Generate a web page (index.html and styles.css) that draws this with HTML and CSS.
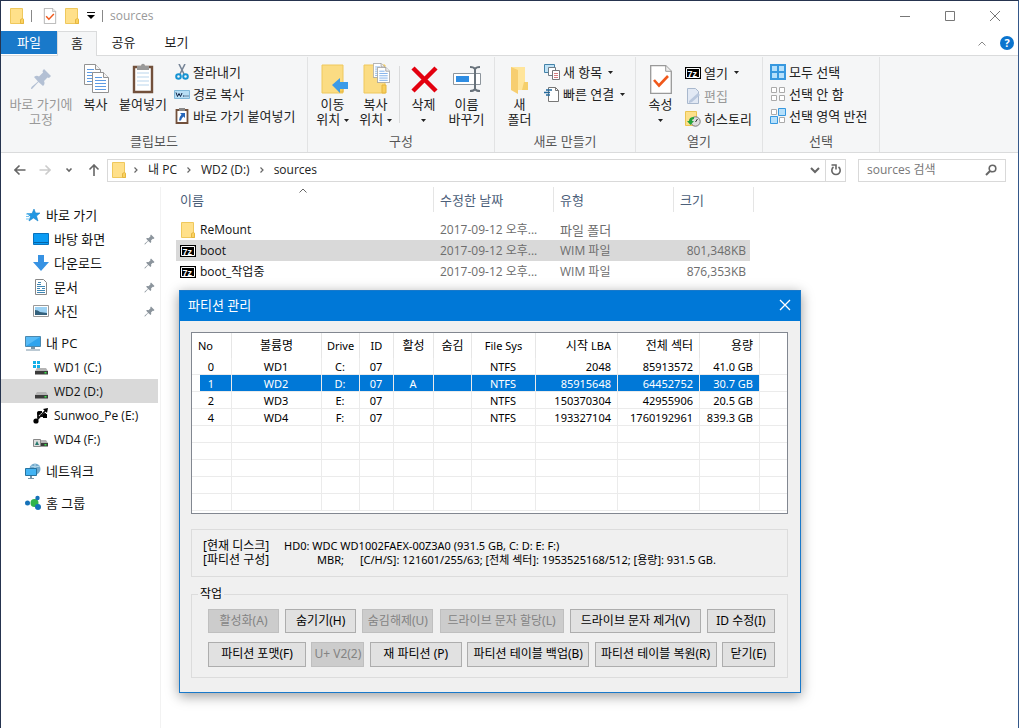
FILE: index.html
```html
<!DOCTYPE html>
<html lang="ko">
<head>
<meta charset="utf-8">
<title>sources</title>
<link rel="stylesheet" href="styles.css">
</head>
<body>
<svg class="defs" aria-hidden="true">
  <symbol id="folder" viewBox="0 0 14 16"><path d="M.5.5h12v10l1 .5v4.5H.5z" fill="#ffe08a" stroke="#efc85c"/><path d="M10.500 15.500v-4l2-1 1 1v4z" fill="#fbd25f" stroke="#e5b640"/></symbol>
  <symbol id="check" viewBox="0 0 22 29"><path d="M.7.7h15l5.600 5.600v22H.7z" fill="#fff" stroke="#999" stroke-width="1.300"/><path d="M15.700.7v5.600h5.600" fill="#eee" stroke="#999"/><path d="M4 15l5 5.500 9-9.500" fill="none" stroke="#f0581b" stroke-width="2.600"/></symbol>
  <symbol id="pin" viewBox="0 0 22 22"><path d="M14 1l7 7-2 2-1.500-.5-3.500 3.500c1 2 .5 4-1 5L8.500 14 2 21l-1 0 .5-2L8 13.500 4 9c2-1.500 3.500-1.500 5-.5l4-4L12.500 3z"/></symbol>
  <symbol id="page" viewBox="0 0 17 21"><path d="M.5.5h11l5 5v15H.5z" fill="#fff" stroke="#929292"/><path d="M11.500.5v5h5" fill="#f2f2f2" stroke="#929292"/><path d="M3 5.500h7M3 8.500h11M3 11.500h11M3 14.500h11M3 17.500h11" stroke="#5d9be3"/></symbol>
  <symbol id="seven" viewBox="0 0 16 12"><path d="M0 0h16v12H0z"/><path d="M1.500 1.500h13v9h-13z" fill="none" stroke="#fff"/><text x="2.500" y="9.500" fill="#fff" font-family="Liberation Sans, sans-serif" font-weight="bold" font-size="9">7z</text></symbol>
  <symbol id="drive" viewBox="0 0 16 16"><path d="M4 8h9l2 3H2z" fill="#b4b4b4"/><path d="M2 11h13v3.500H2z" fill="#3c3c3c"/><path d="M11.500 12h2v1.500h-2z" fill="#38e449"/></symbol>
  <symbol id="tri" viewBox="0 0 5 3"><path d="M0 0h5L2.500 3z" fill="currentColor"/></symbol>
  <symbol id="chev" viewBox="0 0 8 8"><path d="M2.500 1.500L5 4 2.500 6.500" fill="none" stroke="#666" stroke-width="1.200"/></symbol>
</svg>
<div class="window">
  <header class="titlebar">
    <svg class="qi"><use href="#folder"/></svg><i class="bar"></i>
    <svg class="qi check"><use href="#check"/></svg>
    <svg class="qi"><use href="#folder"/></svg>
    <svg class="quick" viewBox="0 0 8 7"><path d="M0 .5h8" stroke="#111"/><path d="M0 3h8L4 7z"/></svg><i class="bar"></i>
    <span class="caption">sources</span>
    <div class="controls">
      <button aria-label="최소화"><svg viewBox="0 0 12 12"><path d="M1 6.500h10"/></svg></button>
      <button aria-label="최대화"><svg viewBox="0 0 12 12"><path d="M1.500 1.500h9v9h-9z"/></svg></button>
      <button aria-label="닫기"><svg viewBox="0 0 12 12"><path d="M1 1l10 10M11 1L1 11"/></svg></button>
    </div>
  </header>
  <nav class="tabs">
    <button class="tab file">파일</button><button class="tab active">홈</button><button class="tab">공유</button><button class="tab">보기</button>
    <div class="help"><svg class="up" viewBox="0 0 8 5"><path d="M.5 4.500L4 1l3.500 3.500" fill="none" stroke="#888"/></svg><button class="question" aria-label="도움말">?</button></div>
  </nav>

  <section class="ribbon">
    <div class="group clip">
      <div class="tools">
        <button class="big wide off"><svg viewBox="0 0 32 32"><use href="#pin" x="5" y="5" width="22" height="22" fill="#b3c0d4"/></svg>바로 가기에<br>고정</button>
        <button class="big mid"><svg viewBox="0 0 32 32"><use href="#page" x="4" y="1" width="17" height="21"/><use href="#page" x="12" y="9" width="17" height="21"/></svg>복사</button>
        <button class="big paste"><svg viewBox="0 0 32 32"><path d="M7 4h18v25H7z" fill="#fff" stroke="#72503b" stroke-width="2.400"/><path d="M10 10h12M10 14h12M10 18h12M10 22h12" stroke="#b9d5ec"/><path d="M10 3h4c0-3 4-3 4 0h4v4H10z" fill="#999"/></svg>붙여넣기</button>
        <div class="smalls">
          <button class="small"><svg viewBox="0 0 16 16"><path d="M5 0l5 10M11 0L6 10" stroke="#788698" stroke-width="1.600"/><circle cx="4.500" cy="12.500" r="2.300" fill="none" stroke="#1593d3" stroke-width="2"/><circle cx="11.500" cy="12.500" r="2.300" fill="none" stroke="#1593d3" stroke-width="2"/></svg>잘라내기</button>
          <button class="small"><svg viewBox="0 0 16 16"><path d="M.5 4.500h15v8H.5z" fill="#b7def5" stroke="#80b8d9"/><path d="M2 6.500l1.500 4 1.500-3 1.500 3L8 7M9 10h1.500M11.500 10h1M13.500 10h1" fill="none" stroke="#124"/></svg>경로 복사</button>
          <button class="small"><svg viewBox="0 0 16 16"><path d="M2.500 2h11v13h-11z" fill="#fff" stroke="#72503b" stroke-width="1.800"/><path d="M5 0h6v3H5z" fill="#888"/><path d="M6 5h5v5L9.500 8.500Q7.500 10 7 12.500H5Q5 9 7.500 6.500z" fill="#2767ba"/></svg>바로 가기 붙여넣기</button>
        </div>
      </div>
      <div class="name">클립보드</div>
    </div>
    <div class="group org">
      <div class="tools">
        <button class="big mid"><svg viewBox="0 0 32 32"><path d="M5 2h21v28H5z" fill="#fbdc83" stroke="#efc85c"/><path d="M22 23v6h4v-6z" fill="#f8cf5d" stroke="#e5b640"/><path d="M15 22l8-7v4h8v7h-8v4z" fill="#3c9be8"/></svg>이동<br>위치 <svg class="tri"><use href="#tri"/></svg></button>
        <button class="big mid"><svg viewBox="0 0 32 32"><path d="M4 2h21v28H4z" fill="#fbdc83" stroke="#efc85c"/><path d="M22 22v8h4v-8z" fill="#f8cf5d" stroke="#e5b640"/><use href="#page" x="13" y="0" width="12" height="15"/><use href="#page" x="17" y="4" width="13" height="16"/></svg>복사<br>위치 <svg class="tri"><use href="#tri"/></svg></button>
        <i class="split"></i>
        <button class="big mid"><svg viewBox="0 0 32 32"><path d="M5 5l23 23M28 5L5 28" stroke="#e3000f" stroke-width="4.500"/></svg>삭제<br><svg class="tri"><use href="#tri"/></svg></button>
        <button class="big mid"><svg viewBox="0 0 32 32"><path d="M2.500 10.500h27v11h-27z" fill="#fff" stroke="#8d959c"/><path d="M5 13h13v6H5z" fill="#2e8de3"/><path d="M19 4q4 0 5 2 1-2 5-2M24 6v20M19 28q4 0 5-2 1 2 5 2" fill="none" stroke="#68727b" stroke-width="2"/></svg>이름<br>바꾸기</button>
      </div>
      <div class="name">구성</div>
    </div>
    <div class="group new">
      <div class="tools">
        <button class="big mid"><svg viewBox="0 0 32 32"><path d="M7 4h14v16l3 3v4H7z" fill="#ffe59b"/><path d="M7 4l7 3v24l-7-4z" fill="#f7ce70"/><path d="M20 19h4v8h-6z" fill="#f5cf6c"/></svg>새<br>폴더</button>
        <div class="smalls">
          <button class="small"><svg viewBox="0 0 16 16"><path d="M.5.5h10v8H.5z" fill="#bfe2f7" stroke="#4382a8"/><path d="M4.500 3.500h7v8h-7z" fill="#fff" stroke="#6f7c86"/><path d="M8.500 6.500h7v9h-7z" fill="#fff" stroke="#777"/><path d="M10 9.500h4M10 11.500h4M10 13.500h4" stroke="#d67d7d"/></svg>새 항목 <svg class="tri"><use href="#tri"/></svg></button>
          <button class="small"><svg viewBox="0 0 16 16"><path d="M4.500 1.500h7l3 3v11h-10z" fill="#fff" stroke="#777"/><path d="M2 4h6M0 6.500h6M2 9h4" stroke="#23689c" stroke-width="1.300"/><path d="M11.500 1.500v3h3" fill="none" stroke="#777"/></svg>빠른 연결 <svg class="tri"><use href="#tri"/></svg></button>
        </div>
      </div>
      <div class="name">새로 만들기</div>
    </div>
    <div class="group open">
      <div class="tools">
        <button class="big mid"><svg viewBox="0 0 32 32"><use href="#check" x="5" y="2" width="22" height="29"/></svg>속성<br><svg class="tri"><use href="#tri"/></svg></button>
        <div class="smalls loose">
          <button class="small"><svg viewBox="0 0 16 16"><use href="#seven" y="2" width="16" height="12"/></svg>열기 <svg class="tri"><use href="#tri"/></svg></button>
          <button class="small off"><svg viewBox="0 0 16 16"><path d="M2.500.5h8l3 3v12h-11z" fill="#e2e9f4" stroke="#a9b8cd"/><path d="M4 13l9-8 2 2-8 7-3 1z" fill="#b9c7dd"/></svg>편집</button>
          <button class="small"><svg viewBox="0 0 16 16"><path d="M.5.5h11v14H.5z" fill="#fde08a" stroke="#ebc552"/><circle cx="10.500" cy="10.500" r="4.700" fill="#ddd" stroke="#777"/><path d="M10.500 11l2-3" stroke="#333"/><path d="M2 10h2q0-4 5-4v2q-2 0-2 2h2l-3.500 4z" fill="#25a33a"/></svg>히스토리</button>
        </div>
      </div>
      <div class="name">열기</div>
    </div>
    <div class="group select">
      <div class="tools">
        <div class="smalls">
          <button class="small"><svg viewBox="0 0 16 16"><path d="M0 0h16v16H0z" fill="#3798df"/><path d="M2 2h5v5H2zM9 2h5v5H9zM2 9h5v5H2zM9 9h5v5H9z" fill="#b6e0fb"/></svg>모두 선택</button>
          <button class="small"><svg viewBox="0 0 16 16"><path d="M1.500 1.500h5v5h-5zM9.500 1.500h5v5h-5zM1.500 9.500h5v5h-5zM9.500 9.500h5v5h-5z" fill="#fff" stroke="#aaa"/></svg>선택 안 함</button>
          <button class="small"><svg viewBox="0 0 16 16"><path d="M1.500 1.500h5v5h-5zM9.500 9.500h5v5h-5z" fill="#fff" stroke="#aaa"/><path d="M8.500.5h7v7h-7zM.5 8.500h7v7h-7z" fill="#b6e0fb" stroke="#3798df"/></svg>선택 영역 반전</button>
        </div>
      </div>
      <div class="name">선택</div>
    </div>
  </section>

  <div class="address">
    <div class="arrows">
      <button aria-label="뒤로"><svg viewBox="0 0 12 12"><path d="M11.500 6H1M5.500 1.500L1 6l4.500 4.500"/></svg></button>
      <button aria-label="앞으로" class="faint"><svg viewBox="0 0 12 12"><path d="M.5 6H11M6.500 1.500L11 6l-4.500 4.500"/></svg></button>
      <button aria-label="최근 위치" class="recent"><svg viewBox="0 0 12 12"><path d="M3.500 4.500L6 7l2.500-2.500"/></svg></button>
      <button aria-label="위로"><svg viewBox="0 0 12 12"><path d="M6 12V1M1.500 5.500L6 1l4.500 4.500"/></svg></button>
    </div>
    <div class="path">
      <svg class="qi"><use href="#folder"/></svg>
      <svg class="chev"><use href="#chev"/></svg><a href="#pc">내 PC</a>
      <svg class="chev"><use href="#chev"/></svg><a href="#d">WD2 (D:)</a>
      <svg class="chev"><use href="#chev"/></svg><a href="#s">sources</a>
      <button class="drop" aria-label="이전 위치"><svg viewBox="0 0 10 10"><path d="M1 3l4 4 4-4" fill="none" stroke="#666" stroke-width="2"/></svg></button>
      <button class="refresh" aria-label="새로 고침"><svg viewBox="0 0 12 12"><path d="M8.500 3a4.200 4.200 0 1 1-5 0" fill="none" stroke="#666" stroke-width="1.600"/><path d="M1.500 1h4.500v4.500" fill="none" stroke="#666" stroke-width="1.600"/></svg></button>
    </div>
    <label class="search"><input type="text" placeholder="sources 검색" aria-label="sources 검색"><svg viewBox="0 0 12 12"><circle cx="7.500" cy="4.500" r="3.300" fill="none" stroke="#666" stroke-width="1.600"/><path d="M5 7L1 11" stroke="#666" stroke-width="2"/></svg></label>
  </div>

  <main class="content">
    <aside class="side">
      <ul>
        <li class="root"><svg viewBox="0 0 16 16"><path d="M9 2l1.500 4H15l-3.500 3 1.500 5-4.500-3L4 14l1.500-4.500L2 6.500h5z" fill="#2197e3" stroke="#1785c9" stroke-width=".6"/><path d="M1 7h4M1 9.500h3M1 12h3" stroke="#70c3f1" stroke-width="1.200"/></svg>바로 가기</li>
        <li><svg viewBox="0 0 16 16"><path d="M.5 2.500h15v11H.5z" fill="#0b9cf4" stroke="#0872bd"/><path d="M1 11.500h14" stroke="#0564a9"/></svg>바탕 화면<svg class="pin"><use href="#pin"/></svg></li>
        <li><svg viewBox="0 0 16 16"><path d="M5 0h6v7h5l-8 9-8-9h5z" fill="#3792e3"/></svg>다운로드<svg class="pin"><use href="#pin"/></svg></li>
        <li><svg viewBox="0 0 16 16"><path d="M2.500.5h8l3 3v12h-11z" fill="#fff" stroke="#888"/><path d="M5 3.500h3M4 5.500h4M4 7.500h8M4 9.500h3M9 9.500h3M4 11.500h8M4 13.500h8" stroke="#3f86b4"/></svg>문서<svg class="pin"><use href="#pin"/></svg></li>
        <li><svg viewBox="0 0 16 16"><path d="M.5 2.500h15v11H.5z" fill="#fff" stroke="#999"/><path d="M2 4h12v8H2z" fill="#9dd2f4"/><path d="M2 7q3 0 5 2l7 1v2H2z" fill="#34617c"/></svg>사진<svg class="pin"><use href="#pin"/></svg></li>
      </ul>
      <ul>
        <li class="root"><svg viewBox="0 0 16 16"><path d="M.5 1.500h15v10H.5z" fill="#57bbf7" stroke="#4b88ae"/><path d="M1 11L15 2v9z" fill="#2fa4ee"/><path d="M6 12h4v2H6zM1 14.500h14v1H1z" fill="#7894a7"/></svg>내 PC</li>
        <li class="latin"><svg viewBox="0 0 16 16"><use href="#drive"/><path d="M0 1h3v3H0zM4 1h3v3H4zM0 5h3v3H0zM4 5h3v3H4z" fill="#12afe7"/></svg>WD1 (C:)</li>
        <li class="latin current"><svg viewBox="0 0 16 16"><use href="#drive"/></svg>WD2 (D:)</li>
        <li class="latin"><svg viewBox="0 0 16 16"><path d="M3 13L13 2M5 10V6q0-2 3-2h1M8 8h4V5" fill="none" stroke="#111" stroke-width="1.800"/><circle cx="3" cy="13" r="2.600"/><circle cx="6" cy="5" r="2"/><path d="M10 1l5-1-1 5zM10 6h4v4h-4z"/></svg>Sunwoo_Pe (E:)</li>
        <li class="latin"><svg viewBox="0 0 16 16"><use href="#drive"/><path d="M.5 7.500h7v7h-7z" fill="#ddd" stroke="#888"/><path d="M2 13l2-4 2 4z" fill="#28796e"/></svg>WD4 (F:)</li>
      </ul>
      <ul><li class="root"><svg viewBox="0 0 16 16"><circle cx="10" cy="6" r="5.500" fill="#72a9cc"/><path d="M6 3q4 2 9 0M10 1v10" stroke="#b9dced" fill="none"/><path d="M.5 5.500h11v7H.5z" fill="#43b4f4" stroke="#27739f"/><path d="M5 13h2v2h2v1H3v-1h2z" fill="#7894a7"/></svg>네트워크</li></ul>
      <ul><li class="root"><svg viewBox="0 0 16 16"><path d="M10 8l2-5M10 8l3 4" stroke="#69a9c7" stroke-width="2"/><circle cx="9.500" cy="8" r="4" fill="#32b44b"/><circle cx="2.500" cy="8" r="2.500" fill="#1672b9"/><circle cx="12.500" cy="3" r="2.200" fill="#1672b9"/><circle cx="13" cy="12" r="3" fill="#1672b9"/></svg>홈 그룹</li></ul>
    </aside>
    <section class="files">
      <table class="list">
        <thead><tr><th class="c1">이름<svg class="sort" viewBox="0 0 8 5"><path d="M.5 4.500L4 1l3.500 3.500" fill="none" stroke="#666"/></svg></th><th class="c2">수정한 날짜</th><th class="c2">유형</th><th class="c3">크기</th></tr></thead>
        <tbody>
          <tr><td><div class="file-name"><svg viewBox="0 0 16 16"><use href="#folder" x="1" width="14" height="16"/></svg>ReMount</div></td><td>2017-09-12 오후...</td><td class="ko">파일 폴더</td><td></td></tr>
          <tr class="current"><td><div class="file-name"><svg viewBox="0 0 16 16"><use href="#seven" y="2" width="16" height="12"/></svg>boot</div></td><td>2017-09-12 오후...</td><td>WIM 파일</td><td>801,348KB</td></tr>
          <tr><td><div class="file-name"><svg viewBox="0 0 16 16"><use href="#seven" y="2" width="16" height="12"/></svg>boot_작업중</div></td><td>2017-09-12 오후...</td><td>WIM 파일</td><td>876,353KB</td></tr>
        </tbody>
      </table>
    </section>
  </main>
</div>

<div class="dialog" role="dialog" aria-labelledby="dt">
  <header><span id="dt">파티션 관리</span><button aria-label="닫기"><svg viewBox="0 0 12 12"><path d="M1 1l10 10M11 1L1 11" stroke="#fff" stroke-width="1.300"/></svg></button></header>
  <div class="inner">
    <div class="grid">
      <table>
        <colgroup><col class="w40"><col class="w90"><col class="w38"><col class="w34"><col class="w40"><col class="w38"><col class="w64"><col class="w82"><col class="w82"><col class="w60"><col></colgroup>
        <thead><tr><th class="no">No</th><th class="ko">볼륨명</th><th>Drive</th><th>ID</th><th class="ko">활성</th><th class="ko">숨김</th><th>File Sys</th><th class="num ko">시작 <small>LBA</small></th><th class="num ko">전체 섹터</th><th class="num ko">용량</th><th></th></tr></thead>
        <tbody>
          <tr><td>0</td><td>WD1</td><td>C:</td><td>07</td><td></td><td></td><td>NTFS</td><td class="num">2048</td><td class="num">85913572</td><td class="num">41.0 GB</td><td></td></tr>
          <tr class="sel"><td>1</td><td>WD2</td><td>D:</td><td>07</td><td>A</td><td></td><td>NTFS</td><td class="num">85915648</td><td class="num">64452752</td><td class="num">30.7 GB</td><td></td></tr>
          <tr><td>2</td><td>WD3</td><td>E:</td><td>07</td><td></td><td></td><td>NTFS</td><td class="num">150370304</td><td class="num">42955906</td><td class="num">20.5 GB</td><td></td></tr>
          <tr><td>4</td><td>WD4</td><td>F:</td><td>07</td><td></td><td></td><td>NTFS</td><td class="num">193327104</td><td class="num">1760192961</td><td class="num">839.3 GB</td><td></td></tr>
          <tr><td></td><td></td><td></td><td></td><td></td><td></td><td></td><td></td><td></td><td></td><td></td></tr>
          <tr><td></td><td></td><td></td><td></td><td></td><td></td><td></td><td></td><td></td><td></td><td></td></tr>
          <tr><td></td><td></td><td></td><td></td><td></td><td></td><td></td><td></td><td></td><td></td><td></td></tr>
          <tr><td></td><td></td><td></td><td></td><td></td><td></td><td></td><td></td><td></td><td></td><td></td></tr>
          <tr><td></td><td></td><td></td><td></td><td></td><td></td><td></td><td></td><td></td><td></td><td></td></tr>
        </tbody>
      </table>
    </div>
    <dl class="info">
      <dt>[현재 디스크]</dt><dd>HD0: WDC WD1002FAEX-00Z3A0 (931.5 GB, C: D: E: F:)</dd>
      <dt>[파티션 구성]</dt><dd class="scheme"><span>MBR;</span><span>[C/H/S]: 121601/255/63; [전체 섹터]: 1953525168/512; [용량]: 931.5 GB.</span></dd>
    </dl>
    <fieldset>
      <legend>작업</legend>
      <div class="row"><button class="b71" disabled>활성화(A)</button><button class="b71">숨기기(H)</button><button class="b71" disabled>숨김해제(U)</button><button class="b124" disabled>드라이브 문자 할당(L)</button><button class="b131">드라이브 문자 제거(V)</button><button class="b68">ID 수정(I)</button></div>
      <div class="row"><button class="b98">파티션 포맷(F)</button><button class="b53" disabled>U+ V2(2)</button><button class="b92">재 파티션 (P)</button><button class="b122">파티션 테이블 백업(B)</button><button class="b122">파티션 테이블 복원(R)</button><button class="b53">닫기(E)</button></div>
    </fieldset>
  </div>
</div>
</body>
</html>
```
FILE: styles.css
```css
* { box-sizing: border-box; }
body { margin: 0; background: #fff; color: #222; font: 13px/16px "Open Sans", "Noto Sans CJK KR", sans-serif; }
button { font: inherit; color: inherit; background: none; border: 0; padding: 0; margin: 0; white-space: nowrap; }
svg { display: block; flex: none; }
.defs { position: absolute; width: 0; height: 0; }
ul { list-style: none; margin: 0; padding: 0; }

.window { min-height: 100vh; display: flex; flex-direction: column; border-top: 1px solid #26344f; border-left: 1px solid #26344f; border-right: 1px solid #35588a; }
.titlebar { height: 30px; display: flex; align-items: center; padding: 0 1px 1px 9px; }
.qi { width: 14px; height: 16px; }
.titlebar .bar { width: 1px; height: 12px; background: #888; margin: 0 11px 0 7px; }
.titlebar .check { margin-right: 8px; }
.titlebar .quick { width: 8px; height: 7px; margin-left: 8px; }
.titlebar .quick + .bar { margin: 0 7px; }
.caption { color: #999; font-size: 12px; }
.controls { margin-left: auto; display: flex; }
.controls button { width: 45px; height: 28px; display: grid; place-items: center; }
.controls svg { width: 12px; height: 12px; fill: none; stroke: #777; }

.tabs { display: flex; height: 25px; border-bottom: 1px solid #dadbdc; }
.tab { width: 53px; height: 24px; padding-bottom: 3px; }
.tab.file { width: 56px; background: #1979ca; color: #fff; height: 23px; padding-bottom: 2px; }
.tab.active { width: 40px; height: 25px; border: 1px solid #dadbdc; border-bottom: 0; background: #f5f6f7; }
.help { margin-left: auto; display: flex; align-items: center; gap: 14px; padding-right: 4px; }
.up { width: 8px; height: 5px; }
.question { width: 14px; height: 14px; border-radius: 50%; background: #0a74ce; color: #fff; font-weight: bold; font-size: 11px; line-height: 14px; }

.ribbon { display: flex; background: #f5f6f7; border-bottom: 1px solid #dadbdc; padding-top: 1px; }
.group { display: flex; flex-direction: column; height: 95px; border-right: 1px solid #e2e3e4; }
.clip { width: 307px; }
.org { width: 187px; }
.new { width: 141px; }
.open { width: 127px; }
.select { width: 117px; }
.tools { display: flex; flex: 1; padding: 4px 0 0 3px; }
.clip .tools { padding-left: 7px; }
.name { text-align: center; color: #555; padding-bottom: 3px; }
.big { height: 70px; line-height: 15px; text-align: center; display: flow-root; padding-bottom: 2px; }
.big > svg:first-child { width: 32px; height: 32px; margin: 0 auto 2px; }
.big::after { content: ""; display: block; }
.wide { width: 66px; }
.mid { width: 43px; }
.paste { width: 52px; }
.clip .big:not(.wide) { padding-bottom: 17px; }
.off { color: #999; }
.tri { display: inline-block; width: 5px; height: 3px; vertical-align: middle; }
.split { width: 1px; height: 57px; background: #dadbdc; margin: 5px 2px 0; }
.smalls { display: flex; flex-direction: column; padding-left: 5px; }
.new .smalls { padding-left: 3px; }
.open .smalls { padding-left: 3px; }
.select .smalls { padding-left: 4px; }
.small { display: flex; align-items: center; gap: 3px; height: 22px; text-align: left; }
.small > svg:first-child { width: 16px; height: 16px; }
.loose .small { height: 23px; }
.small .tri { margin-left: 3px; }

.address { display: flex; align-items: center; height: 34px; padding: 0 12px 0 13px; }
.arrows { display: flex; width: 93px; justify-content: space-between; padding-right: 7px; }
.arrows svg { width: 12px; height: 12px; fill: none; stroke: #666; stroke-width: 1.600; }
.arrows .faint svg { stroke: #ccc; }
.path { flex: 1; height: 23px; display: flex; align-items: center; border: 1px solid #d9d9d9; padding-left: 4px; }
.path a { color: #222; text-decoration: none; font-size: 12px; }
.path .chev { width: 8px; height: 8px; margin: 0 8px 0 6px; }
.path a + .chev { margin: 0 8px; }
.drop { margin-left: auto; width: 20px; display: grid; place-items: center; }
.drop svg { width: 10px; height: 10px; }
.refresh { width: 20px; height: 21px; border-left: 1px solid #d9d9d9; display: grid; place-items: center; }
.refresh svg { width: 12px; height: 12px; }
.search { width: 148px; height: 23px; margin-left: 12px; border: 1px solid #d9d9d9; display: flex; align-items: center; padding: 0 8px; }
.search input { flex: 1; min-width: 0; border: 0; outline: 0; padding: 0; font: inherit; font-size: 12px; }
.search input::placeholder { color: #777; opacity: 1; }
.search svg { width: 12px; height: 12px; }

.content { flex: 1; display: flex; }
.side { width: 160px; border-right: 1px solid #f2f2f2; padding-top: 16px; display: flex; flex-direction: column; gap: 8px; color: #111; }
.side li { display: flex; align-items: center; gap: 5px; height: 24px; padding: 0 3px 0 32px; white-space: nowrap; margin-right: 2px; }
.side li svg { width: 16px; height: 16px; }
.side li.root { padding-left: 24px; }
.side .latin { font-size: 12px; padding-top: 1px; }
.side li svg.pin { width: 11px; height: 11px; fill: #8b949c; margin-left: auto; }
.current { background: #d9d9d9; }
.files { flex: 1; padding: 0 0 0 15px; }
.list { border-spacing: 0; table-layout: fixed; width: 578px; font-size: 12px; }
.list th { position: relative; font-weight: normal; font-size: 13px; text-align: left; color: #4c607a; height: 25px; border-right: 1px solid #e5e5e5; padding: 0 6px; }
.list thead th:first-child, .list td:first-child { padding-left: 4px; }
.list .c1 { width: 258px; }
.list .c2 { width: 120px; }
.list .sort { position: absolute; left: 123px; top: 1px; width: 8px; height: 5px; }
.list tbody::before { content: ""; display: block; height: 7px; }
.list td { height: 21px; padding: 0 6px; color: #6d6d6d; white-space: nowrap; }
.list td:first-child { color: #111; }
.file-name { display: flex; align-items: center; gap: 4px; }
.file-name svg { width: 16px; height: 16px; }
.list td:last-child { text-align: right; padding-right: 4px; border-right: 4px solid #fff; }
.list .ko { font-size: 13px; }

.dialog { position: absolute; left: 179px; top: 290px; width: 622px; background: #f0f0f0; border: 1px solid #1979ca; box-shadow: 0 3px 12px rgba(0, 0, 0, .4); color: #000; font: 11px/14px "Noto Sans", "Noto Sans CJK KR", sans-serif; }
.dialog header { height: 30px; background: #0078d7; color: #fff; display: flex; align-items: center; justify-content: space-between; padding: 0 9px 2px 8px; font-size: 13px; }
.dialog header svg { width: 12px; height: 12px; }
.inner { padding: 11px 12px 14px 11px; }
.grid { background: #fff; border: 1px solid #828790; padding-bottom: 2px; }
.grid table { width: 100%; table-layout: fixed; border-spacing: 0; }
.grid th { font-weight: normal; height: 25px; padding: 0; border-right: 1px solid #e6e6e6; }
.grid td { height: 17px; line-height: 14px; padding: 2px 1px 0 0; text-align: center; border-right: 1px solid #ebebeb; border-bottom: 1px solid #ebebeb; white-space: nowrap; }
.grid .no { text-align: left; padding-left: 6px; }
.grid .num { text-align: right; padding-right: 6px; }
.grid .ko { font-size: 12px; white-space: nowrap; }
.grid small { font-size: 11px; }
.grid th:last-child, .grid td:last-child { border-right: 0; }
.grid .sel td { background: #0078d7; color: #fff; }
.grid .sel td:first-child { background: linear-gradient(to right, #fff 8px, #0078d7 8px); }
.grid .sel td:last-child { background: #fff; }
.w34 { width: 34px; } .w38 { width: 38px; } .w40 { width: 40px; } .w60 { width: 60px; } .w64 { width: 64px; } .w82 { width: 82px; } .w90 { width: 90px; }
.info { margin: 15px 0 0; border: 1px solid #dcdcdc; padding: 9px 11px; display: grid; grid-template-columns: 81px 1fr; }
.info dt { font-size: 12px; }
.info dd { margin: 0; white-space: nowrap; }
.scheme { display: flex; gap: 16px; padding-left: 33px; }
fieldset { margin: 10px 0 0; border: 1px solid #dcdcdc; padding: 8px 12px 10px 16px; font-size: 12px; min-width: 0; }
legend { padding: 0 2px; margin-left: -10px; line-height: 14px; }
.row { display: flex; justify-content: space-between; }
.row + .row { margin-top: 9px; }
.row button { height: 24px; background: #e1e1e1; border: 1px solid #adadad; padding-bottom: 1px; }
.row + .row button { height: 25px; }
.row button:disabled { background: #ccc; border-color: #bfbfbf; color: #838383; }
.b53 { width: 53px; } .b68 { width: 68px; } .b71 { width: 71px; } .b92 { width: 92px; } .b98 { width: 98px; } .b122 { width: 122px; } .b124 { width: 124px; } .b131 { width: 131px; }
```
